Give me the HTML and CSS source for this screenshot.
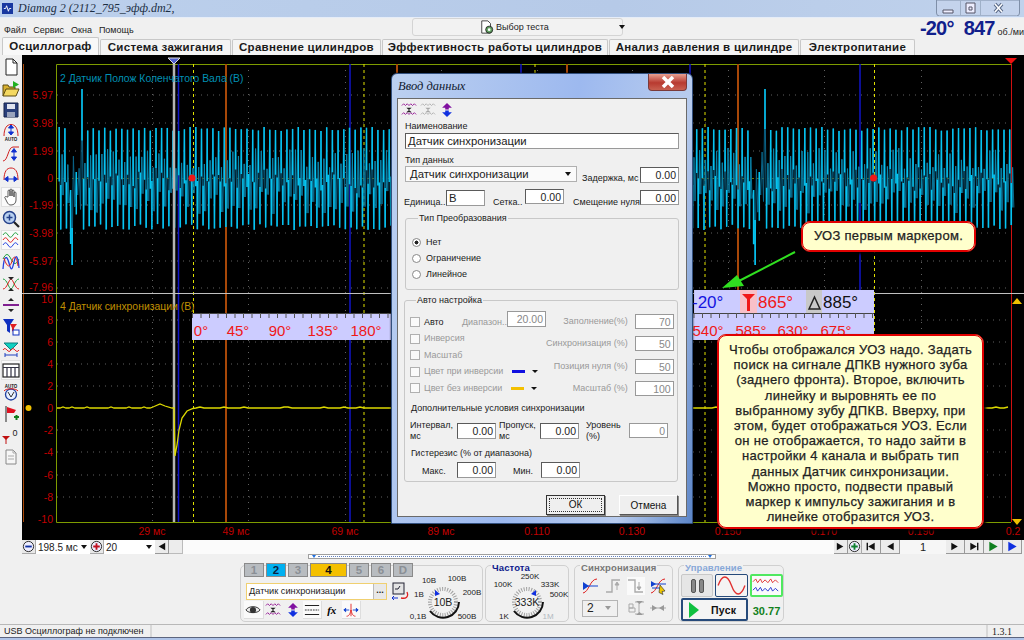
FILE: index.html
```html
<!DOCTYPE html>
<html lang="ru">
<head>
<meta charset="utf-8">
<title>Diamag 2</title>
<link rel="stylesheet" href="styles.css">
</head>
<body>
<svg class="defs" xmlns="http://www.w3.org/2000/svg">
  <symbol id="i-doc" viewBox="0 0 18 18"><path d="M4 1h7l4 4v12H4z" fill="#fff" stroke="#222"/><path d="M11 1v4h4" fill="none" stroke="#222"/></symbol>
  <symbol id="i-folder" viewBox="0 0 18 18"><path d="M1 16V5h5l1 2h6v3" fill="#d8b030" stroke="#5a4a10"/><path d="M1 16l3-7h13l-3 7z" fill="#f4d860" stroke="#5a4a10"/><path d="M11 1l6 3.500-6 3.500z" fill="#20b020"/></symbol>
  <symbol id="i-save" viewBox="0 0 18 18"><path d="M2 2h14v14H2z" fill="#2a3f7a" stroke="#16244c"/><rect x="5" y="3" width="8" height="5" fill="#dfe3ee"/><rect x="5" y="11" width="8" height="5" fill="#9aa3bc"/></symbol>
  <symbol id="i-auto" viewBox="0 0 18 18"><path d="M2 13C2 5 5 1.500 9 1.500s7 3.500 7 11.500" fill="none" stroke="#d02020"/><path d="M9 3v8M6.500 5L9 2l2.500 3zM6.500 9l2.500 3 2.500-3z" fill="#1030d0" stroke="#1030d0"/><text x="9" y="17.500" class="tiny">AUTO</text></symbol>
  <symbol id="i-curve" viewBox="0 0 18 18"><path d="M1 16C6 16 6 2 11 2h6" fill="none" stroke="#d02020"/><path d="M12 5v9M9.500 7L12 3.500 14.500 7zM9.500 12l2.500 3.500 2.500-3.500z" fill="#1030d0" stroke="#1030d0"/></symbol>
  <symbol id="i-arch" viewBox="0 0 18 18"><path d="M2 14C2 5 5 2 9 2s7 3 7 12" fill="none" stroke="#d02020"/><path d="M4 13h10M6 10.500L2.500 13 6 15.500zM12 10.500L15.500 13 12 15.500z" fill="#1030d0" stroke="#1030d0"/></symbol>
  <symbol id="i-hand" viewBox="0 0 18 18"><path d="M6 9V3c0-1.300 2-1.300 2 0v5V2c0-1.300 2-1.300 2 0v6V3c0-1.300 2-1.300 2 0v6V5c0-1.300 2-1.300 2 0v7c0 3-2 5-5 5-2 0-3-1-4-3L3 10c-1-1.200 1-2 2-1z" fill="#fff" stroke="#333" stroke-width=".8"/></symbol>
  <symbol id="i-zoom" viewBox="0 0 18 18"><path d="M11 11l6 6" stroke="#222" stroke-width="2.200"/><circle cx="7.500" cy="7.500" r="6" fill="#b8d0f0" stroke="#24408a" stroke-width="1.500"/><path d="M4.500 7.500h6M7.500 4.500v6" stroke="#24408a" stroke-width="1.500"/></symbol>
  <symbol id="i-waves" viewBox="0 0 18 18"><g fill="none" stroke-width="1"><path d="M1 4c2-3 3-3 5 0s3 3 5 0 3-3 5 0" stroke="#20a040"/><path d="M1 9c2-3 3-3 5 0s3 3 5 0 3-3 5 0" stroke="#e02020"/><path d="M1 14c2-3 3-3 5 0s3 3 5 0 3-3 5 0" stroke="#2040e0"/></g></symbol>
  <symbol id="i-loops" viewBox="0 0 18 18"><g fill="none"><path d="M1 6c3-6 5-6 8 0s5 6 8 0" stroke="#20a040"/><path d="M1 16C2 2 5 2 7 10s3 8 5-1 4-6 5 6" stroke="#2040e0" stroke-width="1.300"/><path d="M2 5c3 10 6 10 8 3s5-4 6 5" stroke="#e02020"/></g></symbol>
  <symbol id="i-cross" viewBox="0 0 18 18"><g fill="none"><path d="M1 4c4 0 6 10 8 10s4-10 8-10" stroke="#20a040"/><path d="M1 14c4 0 6-10 8-10s4 10 8 10" stroke="#e02020"/></g><path d="M6 2h6L9 5zM6 16h6L9 13z" fill="#222"/></symbol>
  <symbol id="i-sep" viewBox="0 0 18 18"><path d="M1 9h16" stroke="#802090" stroke-width="2"/><path d="M6 5l3-3 3 3zM6 13l3 3 3-3z" fill="#222"/></symbol>
  <symbol id="i-filter" viewBox="0 0 18 18"><path d="M1 1h11L8 7v8l-3-2V7z" fill="#1030c0"/><path d="M8 6h7l-3 4v4l-2-1v-3z" fill="#e02020"/><rect x="11" y="12" width="6" height="5" fill="#fff" stroke="#1030c0"/></symbol>
  <symbol id="i-funnel" viewBox="0 0 18 18"><path d="M2 3h14L9 10z" fill="#10d0c0" stroke="#108080"/><path d="M1 10c3-5 5 5 8 0s5 5 8 0" fill="none" stroke="#e02020"/><path d="M3 15h12M3 13v4M15 13v4" stroke="#2040c0"/></symbol>
  <symbol id="i-table" viewBox="0 0 18 18"><rect x="1" y="3" width="16" height="13" fill="#fff" stroke="#222" stroke-width="1.200"/><path d="M1 6.500h16M5 6v10M9 6v10M13 6v10" stroke="#334" stroke-width="1.200"/></symbol>
  <symbol id="i-gauge" viewBox="0 0 18 18"><text x="9" y="5" class="tiny">AUTO</text><circle cx="9" cy="11.500" r="5.500" fill="#e8f0ff" stroke="#2040a0" stroke-width="1.300"/><path d="M6 9l3 5 3-5" fill="none" stroke="#333"/><path d="M2 8c2-3 12-3 14 0" fill="none" stroke="#e02020"/></symbol>
  <symbol id="i-flag" viewBox="0 0 18 18"><path d="M4 1v16" stroke="#222"/><path d="M5 2l9 3-2 3H5z" fill="#e01020"/><path d="M12 12h5M14.500 10v5" stroke="#108020" stroke-width="2"/></symbol>
  <symbol id="i-zero" viewBox="0 0 18 18"><path d="M0 9h8L4 13z" fill="#c01010"/><path d="M4 12v5" stroke="#c01010"/><text x="13" y="9" class="ztext">0</text></symbol>
  <symbol id="i-notes" viewBox="0 0 18 18"><path d="M4 2h7l3 3v11H4z" fill="#f6f6f6" stroke="#888"/><path d="M11 2v3h3M6 8h6M6 11h6" fill="none" stroke="#aaa"/></symbol>
  <symbol id="i-dwave" viewBox="0 0 18 18"><g fill="none" stroke="#901090"><path d="M1 4l2-2 2 2 2-2 2 2 2-2 2 2 2-2 2 2"/><path d="M1 14l2-2 2 2 2-2 2 2 2-2 2 2 2-2 2 2"/></g><path d="M6 6.500h6L9 9zM6 11.500h6L9 9z" fill="#222"/></symbol>
  <symbol id="i-updown" viewBox="0 0 18 18"><path d="M9 1L3.500 6.500H7V8.500h4V6.500h3.500z" fill="#8010a0"/><path d="M9 17L3.500 11.500H7V9.500h4v2h3.500z" fill="#1030e0"/></symbol>
  <symbol id="i-eye" viewBox="0 0 18 18"><path d="M1 9c3-5 13-5 16 0-3 4-13 4-16 0z" fill="#eee" stroke="#222"/><circle cx="9" cy="9" r="3.500" fill="#333"/></symbol>
  <symbol id="i-lines" viewBox="0 0 18 18"><path d="M1 4h16M1 14h16" stroke="#222" stroke-width="1.200"/><path d="M1 9h16" stroke="#222" stroke-dasharray="2 1"/></symbol>
  <symbol id="i-syncarrows" viewBox="0 0 18 18"><path d="M9 2v14" stroke="#e02020"/><path d="M1 9h6M3 7l-2 2 2 2zM17 9h-6M15 7l2 2-2 2z" stroke="#1040d0" fill="#1040d0"/><path d="M4 16c3 0 4-3 5-7 1 4 2 7 5 7" fill="none" stroke="#e02020"/></symbol>
  <symbol id="i-scope" viewBox="0 0 18 18"><rect x="2" y="1" width="11" height="11" fill="#e4e4e4" stroke="#223"/><path d="M4 7h3l2-3" fill="none" stroke="#223"/><path d="M1 16h6M3 14l-2 2 2 2" fill="none" stroke="#1030d0"/><path d="M10 16c5 1 8-1 6-6" fill="none" stroke="#e02020" stroke-width="1.300"/></symbol>
  <symbol id="i-sync1" viewBox="0 0 18 18"><path d="M1 16C7 15 8 2 15 2" fill="none" stroke="#e02020"/><path d="M2 9h14" stroke="#1040d0"/><path d="M1 5l6 4-6 4z" fill="#1040d0"/></symbol>
  <symbol id="i-step-up" viewBox="0 0 18 18"><path d="M1 15h6V3h8" fill="none" stroke="#aaa" stroke-width="1.400"/><path d="M12 13V6M10 8l2-3 2 3z" stroke="#aaa" fill="#aaa"/></symbol>
  <symbol id="i-step-down" viewBox="0 0 18 18"><path d="M1 3h7v12h8" fill="none" stroke="#aaa" stroke-width="1.400"/><path d="M12 5v7M10 10l2 3 2-3z" stroke="#aaa" fill="#aaa"/></symbol>
  <symbol id="i-sync2" viewBox="0 0 18 18"><path d="M1 16C7 15 8 2 15 2" fill="none" stroke="#e02020"/><path d="M2 7h14M2 11h8" stroke="#1040d0"/><path d="M1 4l5 3-5 3z" fill="#1040d0"/><path d="M10 8l5 6-3 .500 1 3-4-2z" fill="#f0c800" stroke="#222" stroke-width=".6"/></symbol>
  <symbol id="i-gsync" viewBox="0 0 18 18"><path d="M2 5h4v4H2zM2 9h6v4H2z" fill="none" stroke="#aaa"/><path d="M8 3h9M8 15h9M12 3v12" stroke="#aaa"/><path d="M9 2h7l-3.500 3zM9 16h7l-3.500-3z" fill="#999"/></symbol>
  <symbol id="i-gin" viewBox="0 0 18 18"><path d="M1 9h16" stroke="#aaa"/><path d="M3 6l5 3-5 3zM15 6l-5 3 5 3z" fill="#999"/></symbol>
  <symbol id="i-minus" viewBox="0 0 14 14"><circle cx="7" cy="7" r="5.500" fill="#eef" stroke="#222"/><path d="M3.500 7h7" stroke="#1030a0" stroke-width="2"/></symbol>
  <symbol id="i-plus" viewBox="0 0 14 14"><circle cx="7" cy="7" r="5.500" fill="#eef" stroke="#222"/><path d="M3.500 7h7M7 3.500v7" stroke="#c01020" stroke-width="2"/></symbol>
  <symbol id="i-plusg" viewBox="0 0 14 14"><circle cx="7" cy="7" r="5.500" fill="#eef" stroke="#222"/><path d="M3.500 7h7M7 3.500v7" stroke="#108030" stroke-width="2"/></symbol>
  <symbol id="i-first" viewBox="0 0 14 14"><path d="M3 3v8" stroke="#111" stroke-width="1.500"/><path d="M11 3v8L4 7z" fill="#111"/></symbol>
  <symbol id="i-prev" viewBox="0 0 14 14"><path d="M11 3v8L4 7z" fill="#111"/></symbol>
  <symbol id="i-next" viewBox="0 0 14 14"><path d="M3 3v8l7-4z" fill="#111"/></symbol>
  <symbol id="i-last" viewBox="0 0 14 14"><path d="M11 3v8" stroke="#111" stroke-width="1.500"/><path d="M3 3v8l7-4z" fill="#111"/></symbol>
  <symbol id="i-pg" viewBox="0 0 14 14"><path d="M3 2v10l9-5z" fill="#108020"/></symbol>
  <symbol id="i-pb" viewBox="0 0 14 14"><path d="M3 2v10l9-5z" fill="#1030e0"/></symbol>
  <symbol id="i-test" viewBox="0 0 16 16"><path d="M2 1h7l3 3v11H2z" fill="#fff" stroke="#333"/><circle cx="10.500" cy="11" r="4" fill="#60a060" stroke="#222"/><circle cx="10.500" cy="11" r="1.500" fill="#fff"/></symbol>
</svg>

<div class="app">
  <header class="titlebar">
    <div class="title-left">
      <svg class="appicon" viewBox="0 0 12 12"><rect width="12" height="12" fill="#1838a0"/><path d="M2 6h2l1-3 2 6 1-3h2" fill="none" stroke="#fff"/></svg>
      <span class="apptitle">Diamag 2 (2112_795_эфф.dm2,</span>
    </div>
    <div class="winctrls">
      <svg viewBox="0 0 84 16" class="winsvg">
        <path d="M.5 0v13a3 3 0 0 0 3 3h77a3 3 0 0 0 3-3V0z" fill="#c4d3ec" stroke="#7f8fa8"/>
        <path d="M24.500 0v16M44.500 0v16" stroke="#9fb0c8"/>
        <path d="M7 10h10v3H7z" fill="#eef" stroke="#556"/>
        <path d="M30 3h9v10h-9z" fill="#eef" stroke="#556"/><path d="M33 7h3v3h-3z" fill="none" stroke="#556"/>
        <path d="M59 4l7 8M66 4l-7 8" stroke="#5a6a88" stroke-width="3.500"/><path d="M59 4l7 8M66 4l-7 8" stroke="#fff" stroke-width="1.500"/>
      </svg>
    </div>
  </header>

  <div class="menubar">
    <nav class="menu"><span>Файл</span><span>Сервис</span><span>Окна</span><span>Помощь</span></nav>
    <div class="testcombo">
      <svg class="testicon"><use href="#i-test"/></svg>
      <span class="testlabel">Выбор теста</span>
      <span class="caret"></span>
    </div>
    <div class="rpm"><b>-20°</b><b class="rpmval">847</b><small>об./ми</small></div>
  </div>

  <nav class="tabs">
    <span class="tab active t1">Осциллограф</span>
    <span class="tab t2">Система зажигания</span>
    <span class="tab t3">Сравнение цилиндров</span>
    <span class="tab t4">Эффективность работы цилиндров</span>
    <span class="tab t5">Анализ давления в цилиндре</span>
    <span class="tab t6">Электропитание</span>
  </nav>

  <div class="main">
    <aside class="tools">
      <svg class="tool"><use href="#i-doc"/></svg>
      <svg class="tool"><use href="#i-folder"/></svg>
      <svg class="tool"><use href="#i-save"/></svg>
      <svg class="tool"><use href="#i-auto"/></svg>
      <svg class="tool"><use href="#i-curve"/></svg>
      <svg class="tool"><use href="#i-arch"/></svg>
      <svg class="tool pressed"><use href="#i-hand"/></svg>
      <svg class="tool"><use href="#i-zoom"/></svg>
      <svg class="tool pressed"><use href="#i-waves"/></svg>
      <svg class="tool"><use href="#i-loops"/></svg>
      <svg class="tool"><use href="#i-cross"/></svg>
      <svg class="tool"><use href="#i-sep"/></svg>
      <svg class="tool"><use href="#i-filter"/></svg>
      <svg class="tool"><use href="#i-funnel"/></svg>
      <svg class="tool pressed"><use href="#i-table"/></svg>
      <svg class="tool"><use href="#i-gauge"/></svg>
      <svg class="tool"><use href="#i-flag"/></svg>
      <svg class="tool"><use href="#i-zero"/></svg>
      <svg class="tool"><use href="#i-notes"/></svg>
    </aside>

    <svg class="chart" viewBox="22 55 1002 485" xmlns="http://www.w3.org/2000/svg">
      <rect x="22" y="55" width="1002" height="485" fill="#000"/>
      <path class="griddot" d="M57 95H1011M57 123H1011M57 151H1011M57 205H1011M57 233H1011M57 261H1011M57 288H1011M57 320H1011M57 342H1011M57 364H1011M57 386H1011M57 430H1011M57 452H1011M57 475H1011M57 497H1011"/>
      <path class="griddot" d="M152.500 64V522M248.500 64V522M345.500 64V522M441.500 64V522M537.500 64V522M632.500 64V522M728.500 64V522M824.500 64V522M921.500 64V522"/>
      <path class="zeroline" d="M57 178.500H1011"/>
      <path class="frame" d="M1011 64.500H56.500V522.500H1011"/>
      <path class="redline" d="M1011.500 64V522"/>
      <path class="brown thin" d="M23.500 64V522"/>
      <path class="brown" d="M226 64V522M397 64V522M567 64V522M738 64V522"/>
      <path class="blue" d="M178.500 64V522M350 64V522M521 64V522M690 64V522M860 64V522"/>
      <path class="dash" d="M193.500 64V522M364 64V522M535 64V522M705 64V522M874.500 64V522"/>
      <path id="wave-dark" class="wave-dark"/>
      <path id="wave-mid" class="wave-mid"/>
      <path id="wave-bright" class="wave-bright"/>
      <path class="gray" d="M174 62V522"/>
      <path class="whiteline" d="M22 293.500H1024"/>
      <path id="trace" class="trace"/>
      <path d="M168 58h12l-6 6z" fill="#5060d0" stroke="#ddd"/>
      <path d="M1005 58h12l-6 6z" fill="#f01010"/>
      <path d="M1012 304l5-6 5 6z" fill="#f0c000"/>
      <path d="M1012 519h10l-5 6z" fill="#f0c000"/>
      <circle cx="28.500" cy="408" r="3" fill="#f0c000"/>
      <circle cx="192" cy="178" r="3.500" fill="#f01818"/>
      <circle cx="873.500" cy="178" r="3.500" fill="#f01818"/>
      <text class="chan-a" x="60" y="82">2 Датчик Полож Коленчатого Вала (В)</text>
      <text class="chan-b" x="60" y="310">4 Датчик синхронизации (В)</text>
      <g class="ylab">
        <text x="53" y="99">5.97</text><text x="53" y="127">3.98</text><text x="53" y="155">1.99</text><text x="53" y="182">0</text>
        <text x="53" y="209">-1.99</text><text x="53" y="237">-3.98</text><text x="53" y="265">-5.97</text><text x="53" y="291">-7.96</text>
        <text x="53" y="303">10</text><text x="53" y="324">8</text><text x="53" y="346">6</text><text x="53" y="368">4</text><text x="53" y="390">2</text>
        <text x="53" y="412">0</text><text x="53" y="434">-2</text><text x="53" y="456">-4</text><text x="53" y="479">-6</text><text x="53" y="501">-8</text><text x="53" y="523">-10</text>
      </g>
      <g class="xlab">
        <text x="152" y="535">29 мс</text><text x="236" y="535">49 мс</text><text x="345" y="535">69 мс</text><text x="441" y="535">89 мс</text>
        <text x="537" y="535">0.110</text><text x="632" y="535">0.130</text><text x="728" y="535">0.150</text><text x="824" y="535">0.170</text><text x="921" y="535">0.190</text><text x="1013" y="535">0.2</text>
      </g>
      <rect x="192" y="313" width="682" height="27" fill="#ccccff"/>
      <rect x="694" y="290" width="180" height="23" fill="#ccccff"/>
      <rect x="740" y="290" width="17" height="23" fill="#f8c0c8"/>
      <rect x="806" y="290" width="16" height="23" fill="#c8c8c8"/>
      <path d="M742 294h13l-5 5v12h-3V299z" fill="#f01818"/>
      <path d="M809 309l5.500-12 5.500 12z" fill="none" stroke="#222" stroke-width="1.500"/>
      <path d="M192 313.500H874" stroke="#444"/>
      <path class="rticks" d="M192 315.500H874"/>
      <g class="rlab">
        <text x="201" y="336">0°</text><text x="238" y="336">45°</text><text x="280" y="336">90°</text><text x="323" y="336">135°</text><text x="366" y="336">180°</text>
        <text x="708" y="336">540°</text><text x="751" y="336">585°</text><text x="793" y="336">630°</text><text x="836" y="336">675°</text>
      </g>
      <g class="rtop">
        <text class="rblue" x="692" y="308">-20°</text>
        <text class="rred" x="758" y="308">865°</text>
        <text x="823" y="308">885°</text>
      </g>
      <path d="M795 252l-58 30" stroke="#30e020" stroke-width="2"/>
      <path d="M722 288l15-13 7 11z" fill="#30e020"/>
    </svg>
  </div>

  <div class="zoombar">
    <svg class="zb-ic"><use href="#i-minus"/></svg>
    <div class="zb-field f1"><span>198.5 мс</span><i class="caret"></i></div>
    <svg class="zb-ic"><use href="#i-plus"/></svg>
    <div class="zb-field f2"><span>20</span><i class="caret"></i></div>
    <svg class="zb-btn"><use href="#i-prev"/></svg>
    <div class="zb-thumb"></div>
    <div class="zb-track"></div>
    <svg class="zb-btn"><use href="#i-next"/></svg>
    <svg class="zb-ic"><use href="#i-plusg"/></svg>
    <svg class="zb-btn w"><use href="#i-first"/></svg>
    <svg class="zb-btn w"><use href="#i-prev"/></svg>
    <div class="zb-page">1</div>
    <svg class="zb-btn w"><use href="#i-next"/></svg>
    <svg class="zb-btn w"><use href="#i-last"/></svg>
    <svg class="zb-btn w"><use href="#i-pg"/></svg>
    <svg class="zb-btn w"><use href="#i-pb"/></svg>
  </div>

  <div class="slider"><span class="tri"></span><span class="dots"></span><span class="tri"></span></div>

  <div class="groups">
    <section class="group g1">
      <div class="g1-left">
        <div class="chans">
          <span class="ch off">1</span><span class="ch cyan">2</span><span class="ch off">3</span><span class="ch gold">4</span><span class="ch off">5</span><span class="ch off">6</span><span class="ch off">D</span>
        </div>
        <div class="namerow">
          <div class="namebox"><span>Датчик синхронизации</span><b>...</b></div>
          <svg class="ic18"><use href="#i-scope"/></svg>
        </div>
        <div class="iconrow">
          <span class="cell raised"><svg class="ic16"><use href="#i-eye"/></svg></span>
          <span class="cell"><svg class="ic16"><use href="#i-dwave"/></svg></span>
          <span class="cell"><svg class="ic16"><use href="#i-updown"/></svg></span>
          <span class="cell raised"><svg class="ic16"><use href="#i-lines"/></svg></span>
          <span class="cell fx">fx</span>
          <span class="cell raised"><svg class="ic16"><use href="#i-syncarrows"/></svg></span>
        </div>
      </div>
      <svg class="knob" viewBox="415 570 68 52">
        <circle cx="443" cy="602" r="13" class="kband"/>
        <path d="M430 611A16 16 0 0 0 459 602" class="karc"/>
        <path d="M435 590l5 4-5 2z" fill="#1030e0"/>
        <text class="kmid" x="443" y="606">10В</text>
        <text x="429" y="583">10В</text><text x="457" y="581">100В</text><text x="472" y="595">200В</text><text x="467" y="619">500В</text><text x="418" y="619">0,1В</text><text x="419" y="597">1В</text>
      </svg>
    </section>
    <section class="group g2">
      <h3 class="legend navy">Частота</h3>
      <svg class="knob" viewBox="486 570 83 52">
        <circle cx="527" cy="602" r="13" class="kband"/>
        <path d="M514 611A16 16 0 0 0 543 602" class="karc"/>
        <path d="M536 590l-5 4 5 2z" fill="#1030e0"/>
        <text class="kmid" x="527" y="606">333K</text>
        <text x="503" y="587">100K</text><text x="530" y="579">250K</text><text x="550" y="587">333K</text><text x="559" y="597">500K</text><text x="504" y="619">1K</text><text class="kdim" x="548" y="619">1M</text>
      </svg>
    </section>
    <section class="group g3">
      <h3 class="legend gray-l">Синхронизация</h3>
      <div class="syncrow">
        <svg class="ic18"><use href="#i-sync1"/></svg><svg class="ic18"><use href="#i-step-up"/></svg><span class="hilite"><svg class="ic18"><use href="#i-step-down"/></svg></span><svg class="ic18"><use href="#i-sync2"/></svg>
      </div>
      <div class="syncrow r2">
        <div class="syncsel"><span>2</span><i class="caret dim"></i></div>
        <svg class="ic18"><use href="#i-gsync"/></svg><svg class="ic18"><use href="#i-gin"/></svg>
      </div>
    </section>
    <section class="group g4">
      <h3 class="legend blue-l">Управление</h3>
      <div class="ctlgrid">
        <div class="ctl pause"><i></i><i></i></div>
        <div class="ctl navy-b"><svg viewBox="0 0 30 20"><path d="M2 10c4-11 9-11 13 0s9 11 13 0" fill="none" stroke="#e03030" stroke-width="1.300"/></svg></div>
        <div class="ctl green-b"><svg viewBox="0 0 31 20"><path d="M1 6l3-3 2 4 3-4 2 4 3-3 3 3 3-4 2 4 3-3 3 3" fill="none" stroke="#e03030"/><path d="M1 15l3-3 2 4 3-4 2 4 3-3 3 3 3-4 2 4 3-3 3 3" fill="none" stroke="#2030d0"/></svg></div>
        <div class="ctl run"><svg viewBox="0 0 16 20"><path d="M2 2l10 8-10 8z" fill="#10c040"/></svg><b>Пуск</b></div>
        <b class="fps">30.77</b>
      </div>
    </section>
  </div>

  <footer class="status">
    <span class="st st1">USB Осциллограф не подключен</span>
    <span class="st st2"></span>
    <span class="st st3">1.3.1</span>
  </footer>
  <div class="taskstrip"></div>

  <aside class="callout c1">УОЗ первым маркером.</aside>
  <aside class="callout c2">Чтобы отображался УОЗ надо. Задать<br>поиск на сигнале ДПКВ нужного зуба<br>(заднего фронта). Второе, включить<br>линейку и выровнять ее по<br>выбранному зубу ДПКВ. Вверху, при<br>этом, будет отображаться УОЗ. Если<br>он не отображается, то надо зайти в<br>настройки 4 канала и выбрать тип<br>данных Датчик синхронизации.<br>Можно просто, подвести правый<br>маркер к импульсу зажигания и в<br>линейке отобразится УОЗ.</aside>

  <div class="dialog">
    <div class="dlg-title"><span>Ввод данных</span>
      <div class="dlg-close"><svg viewBox="0 0 16 12"><path d="M3 1l10 10M13 1L3 11" stroke="#fff" stroke-width="3.500"/></svg></div>
    </div>
    <div class="dlg-body">
      <div class="dlg-tools">
        <svg class="ic16"><use href="#i-dwave"/></svg>
        <svg class="ic16 faded"><use href="#i-dwave"/></svg>
        <svg class="ic16"><use href="#i-updown"/></svg>
      </div>
      <label class="lbl l-name">Наименование</label>
      <div class="inp full">Датчик синхронизации</div>
      <label class="lbl l-type">Тип данных</label>
      <div class="row r-type">
        <div class="inp sel">Датчик синхронизации<i class="caret"></i></div>
        <span class="lbl sp-del">Задержка, мс</span>
        <div class="inp num">0.00</div>
      </div>
      <div class="row r-unit">
        <span class="lbl">Единица..</span>
        <div class="inp unit">В</div>
        <span class="lbl sp-grid">Сетка..</span>
        <div class="inp num up">0.00</div>
        <span class="lbl sp-zero">Смещение нуля</span>
        <div class="inp num">0.00</div>
      </div>
      <fieldset class="fs fs1">
        <legend>Тип Преобразования</legend>
        <div class="radio on"><i></i>Нет</div>
        <div class="radio"><i></i>Ограничение</div>
        <div class="radio"><i></i>Линейное</div>
      </fieldset>
      <fieldset class="fs fs2">
        <legend>Авто настройка</legend>
        <div class="auto-top">
          <div class="checks">
            <div class="chk"><i></i>Авто</div>
            <div class="chk dis"><i></i>Инверсия</div>
            <div class="chk dis"><i></i>Масштаб</div>
            <div class="chk dis"><i></i>Цвет при инверсии<u class="sw bluesw"></u><i class="caret sm"></i></div>
            <div class="chk dis"><i></i>Цвет без инверсии<u class="sw goldsw"></u><i class="caret sm"></i></div>
          </div>
          <div class="diap"><span class="lbl dim">Диапазон..</span><div class="inp num dimv">20.00</div></div>
          <div class="rights">
            <div class="rfield"><span class="lbl dim">Заполнение(%)</span><div class="inp num dimv">70</div></div>
            <div class="rfield"><span class="lbl dim">Синхронизация (%)</span><div class="inp num dimv">50</div></div>
            <div class="rfield"><span class="lbl dim">Позиция нуля (%)</span><div class="inp num dimv">50</div></div>
            <div class="rfield"><span class="lbl dim">Масштаб (%)</span><div class="inp num dimv">100</div></div>
          </div>
        </div>
        <div class="lbl extra">Дополнительные условия синхронизации</div>
        <div class="row triple">
          <span class="lbl two w47">Интервал,<br>мс</span><div class="inp num">0.00</div>
          <span class="lbl two w41">Пропуск,<br>мс</span><div class="inp num">0.00</div>
          <span class="lbl two w43">Уровень<br>(%)</span><div class="inp num dimv">0</div>
        </div>
        <div class="lbl hyst">Гистерезис (% от диапазона)</div>
        <div class="row double">
          <span class="lbl maks">Макс.</span><div class="inp num">0.00</div>
          <span class="lbl mins">Мин.</span><div class="inp num">0.00</div>
        </div>
      </fieldset>
      <div class="dlg-btns">
        <button class="btn ok"><span>ОК</span></button>
        <button class="btn">Отмена</button>
      </div>
    </div>
  </div>
</div>
<script src="script.js"></script>
</body>
</html>
```

FILE: styles.css
```css
* { box-sizing: border-box; }
html, body { margin: 0; padding: 0; }
body { width: 1024px; height: 640px; overflow: hidden; background: #f0f0f0; font-family: "Liberation Sans", Arial, sans-serif; }
.defs { display: none; }
.tiny { font: bold 4.5px "Liberation Sans", sans-serif; text-anchor: middle; fill: #111; }
.ztext { font: 9px "Liberation Sans", sans-serif; text-anchor: middle; fill: #222; }
.app { position: relative; width: 1024px; height: 640px; overflow: hidden; background: #f0f0f0; }

.caret { display: inline-block; width: 0; height: 0; border: 3.5px solid transparent; border-top: 4px solid #111; border-bottom: 0; }
.caret.dim { border-top-color: #999; }
.caret.sm { border-width: 3px; border-top-width: 3px; border-bottom: 0; margin-left: 3px; }

/* title bar */
.titlebar { height: 18px; display: flex; justify-content: space-between; background: linear-gradient(90deg, #bcd0ec, #b6cae8 60%, #c0d2ec); border-bottom: 1px solid #e6edf8; }
.title-left { display: flex; align-items: center; gap: 5px; padding-left: 2px; }
.appicon { width: 11px; height: 11px; }
.apptitle { font: italic 12px "Liberation Serif", serif; color: #1c2e44; white-space: nowrap; }
.winctrls { padding-right: 4px; }
.winsvg { display: block; width: 84px; height: 16px; }

/* menu */
.menubar { height: 20px; display: flex; background: #f0f0f0; }
.menu { width: 412px; display: flex; gap: 7px; padding: 7px 0 0 4px; font-size: 9px; color: #222; line-height: 11px; }
.testcombo { width: 211px; height: 18px; display: flex; align-items: center; border: 1px solid #d4d4d4; border-radius: 3px; padding-left: 67px; background: #f2f2f2; }
.testicon { width: 14px; height: 16px; flex: none; }
.testlabel { font-size: 9px; margin-left: 2px; color: #222; white-space: nowrap; }
.testcombo .caret { margin-left: 70px; border-width: 3px; border-top-width: 4px; }
.rpm { margin-left: auto; display: flex; align-items: baseline; color: #11208c; }
.rpm b { font-size: 20px; line-height: 20px; letter-spacing: -.8px; }
.rpm .rpmval { margin-left: 10px; }
.rpm small { font-size: 9px; color: #222; margin-left: 3px; white-space: nowrap; }

/* tabs */
.tabs { height: 17px; display: flex; padding-left: 2px; gap: 1px; align-items: flex-end; }
.tab { height: 16px; border: 1px solid #c8c8c8; border-bottom: 0; border-radius: 2px 2px 0 0; background: #f4f4f4; font-size: 11.500px; font-weight: bold; color: #1a1a1a; text-align: center; line-height: 15px; letter-spacing: .28px; white-space: nowrap; overflow: hidden; }
.tab.active { height: 18px; background: #f8f8f8; line-height: 16px; font-size: 11.500px; }
.t1 { width: 97px; } .t2 { width: 131px; } .t3 { width: 149px; } .t4 { width: 226px; } .t5 { width: 190px; } .t6 { width: 115px; }

/* main */
.main { height: 485px; display: flex; }
.tools { width: 22px; display: flex; flex-direction: column; align-items: center; background: #f0f0f0; padding-top: 1px; }
.tool { width: 18px; height: 18px; margin: 1.850px 0; flex: none; }
.tool.pressed { background: #fafafa; outline: 1px solid #e0e0e0; }
.chart { width: 1002px; height: 485px; display: block; font-family: "Liberation Sans", sans-serif; }
.griddot { stroke: #606060; stroke-dasharray: 1 5; fill: none; }
.zeroline { stroke: #707000; stroke-dasharray: 2 3; fill: none; }
.frame { stroke: #7e9c00; fill: none; }
.redline { stroke: #d01010; }
.brown { stroke: #a84808; stroke-width: 2; }
.brown.thin { stroke-width: 1; }
.blue { stroke: #1014c8; stroke-width: 1.500; }
.dash { stroke: #e0e000; stroke-dasharray: 3 3; }
.gray { stroke: #b4b4b4; stroke-width: 2.500; }
.whiteline { stroke: #c0c0c0; }
.wave-dark { stroke: #0a6488; stroke-width: 1; fill: none; }
.wave-mid { stroke: #0a88ac; stroke-width: 1; fill: none; }
.wave-bright { stroke: #06c4f0; stroke-width: 1.500; fill: none; }
.trace { stroke: #dcd800; stroke-width: 1.300; fill: none; }
.chan-a { font-size: 10.400px; fill: #0090b4; }
.chan-b { font-size: 10.400px; fill: #c09000; }
.ylab text { font-size: 10.500px; fill: #c40000; text-anchor: end; }
.xlab text { font-size: 10.500px; fill: #c00000; text-anchor: middle; }
.rticks { stroke: #555; stroke-width: 5; stroke-dasharray: 1 7.500; fill: none; }
.rlab text { font-size: 15px; fill: #f01818; text-anchor: middle; }
.rtop text { font-size: 17px; fill: #111; }
.rtop .rblue { fill: #1414e0; }
.rtop .rred { fill: #f01818; }

/* zoom bar */
.zoombar { height: 14px; display: flex; padding-left: 22px; background: #f0f0f0; font-size: 10px; color: #222; }
.zb-ic { width: 14px; height: 14px; background: #e8e8e8; border-right: 1px solid #aaa; border-bottom: 1px solid #aaa; flex: none; }
.zb-field { background: #fff; display: flex; align-items: center; justify-content: space-between; padding: 0 3px 0 2px; white-space: nowrap; flex: none; }
.f1 { width: 54px; } .f2 { width: 51px; }
.zb-btn { width: 14px; height: 14px; background: #ececec; border-right: 1px solid #999; border-bottom: 1px solid #999; flex: none; }
.zb-btn.w { width: 19px; }
.zb-thumb { width: 14px; height: 14px; background: #ececec; border-right: 1px solid #bbb; border-bottom: 1px solid #bbb; flex: none; }
.zb-track { width: 651px; background: #fbfbfb; flex: none; }
.zb-page { width: 46px; text-align: center; line-height: 14px; font-size: 11px; background: #f6f6f6; flex: none; }

/* slider */
.slider { width: 408px; height: 5px; margin: 0 0 0 308px; display: flex; align-items: center; justify-content: space-between; border: 1px solid #a0a0a0; background: #fff; padding: 0 3px; }
.slider .dots { flex: 1; border-top: 1px dotted #6080c0; margin: 0 2px; }
.slider .tri { width: 0; height: 0; border: 2.500px solid transparent; border-top: 3px solid #2070e0; border-bottom: 0; }

/* groups */
.groups { height: 60px; margin-top: 3px; padding: 3px 0 0 240px; display: flex; }
.group { position: relative; height: 57px; border: 1px solid #d0d0d0; border-radius: 5px; }
.legend { margin: 0; font-size: 9.500px; font-weight: bold; line-height: 12px; letter-spacing: .1px; position: absolute; top: -4px; left: 5px; background: #f0f0f0; padding: 0 1px; white-space: nowrap; }
.legend.navy { color: #0e1a8c; }
.legend.gray-l { color: #777; }
.legend.blue-l { color: #88a8d8; }
.g1 { width: 243px; display: flex; }
.g2 { width: 84px; margin-left: 2px; }
.g3 { width: 99px; margin-left: 5px; }
.g4 { width: 106px; margin-left: 5px; }
.g1-left { width: 174px; flex: none; }
.chans { display: flex; gap: 2px; margin: -3px 0 0 3px; }
.ch { width: 20px; height: 14px; border: 1px solid #8a8a8a; background: #b8bcc0; color: #8a8f95; font-size: 11.500px; font-weight: bold; text-align: center; line-height: 13px; }
.ch.cyan { background: #00b0f0; color: #0a2040; }
.ch.gold { width: 37px; background: #f4c000; color: #111; }
.namerow { display: flex; align-items: center; gap: 4px; margin: 5px 0 0 5px; }
.namebox { width: 141px; height: 17px; display: flex; justify-content: space-between; background: #fff; border: 1px solid #f0d070; font-size: 9.200px; line-height: 15px; padding-left: 2px; color: #222; white-space: nowrap; }
.namebox b { width: 13px; background: #e8e8e8; border-left: 1px solid #bbb; font-size: 9px; text-align: center; line-height: 12px; }
.ic18 { width: 18px; height: 18px; flex: none; display: block; }
.ic16 { width: 16px; height: 16px; flex: none; display: block; }
.iconrow { display: flex; margin: 1px 0 0 3px; align-items: center; }
.cell { width: 19.500px; height: 18px; display: flex; align-items: center; justify-content: center; }
.cell.raised { background: #fafafa; border-right: 1px solid #ddd; border-bottom: 1px solid #ddd; }
.fx { font: italic bold 11px "Liberation Serif", serif; }
.knob { display: block; overflow: visible; font-family: "Liberation Sans", sans-serif; }
.g1 .knob { width: 68px; height: 52px; margin-top: 4px; margin-left: 0; flex: none; }
.g2 .knob { width: 83px; height: 52px; margin-top: 4px; }
.knob text { font-size: 8px; fill: #222; text-anchor: middle; }
.knob .kmid { font-size: 10.500px; }
.knob .kdim { fill: #b0b8c0; }
.kband { fill: #f2f2f2; stroke: #a0a0a0; stroke-width: 4; stroke-dasharray: 1 1.500; }
.karc { fill: none; stroke: #111; stroke-width: 2; }
.syncrow { display: flex; align-items: center; gap: 4.500px; padding: 11px 0 0 7px; }
.hilite { background: #fafafa; display: block; }
.syncrow.r2 { padding-top: 4px; gap: 4px; }
.syncsel { width: 36px; height: 17px; display: flex; align-items: center; justify-content: space-between; border: 1px solid #b4b4b4; padding: 0 6px 0 4px; font-size: 12px; color: #222; margin-right: 5px; flex: none; }
.ctlgrid { display: grid; grid-template-columns: 32px 33px 33px; grid-template-rows: 23px 23px; gap: 1px 2px; padding: 8px 0 0 2px; }
.ctl { border: 1px solid #c8c8c8; border-radius: 2px; display: flex; align-items: center; justify-content: center; background: #f0f0f0; }
.ctl svg { width: 100%; height: 100%; display: block; }
.pause { gap: 3px; background: #e6e6e6; }
.pause i { width: 5px; height: 14px; background: #888; border: 1px solid #555; border-radius: 2px; }
.navy-b { border: 1px solid #264a7a; background: #f4f4f4; }
.green-b { border: 2px solid #50e860; background: #fbfbfb; }
.run { grid-column: 1 / span 2; border: 2px solid #264a7a; justify-content: flex-start; gap: 8px; padding-left: 4px; background: #f4f4f4; }
.run svg { width: 16px; height: 20px; flex: none; }
.run b { font-size: 10.500px; color: #111; letter-spacing: .3px; }
.fps { font-size: 11px; color: #128020; align-self: end; justify-self: center; line-height: 14px; padding-bottom: 3px; white-space: nowrap; }

/* status */
.status { height: 13px; margin-top: 2px; border-top: 1px solid #b8b8b8; display: flex; font-size: 9px; color: #222; line-height: 11px; }
.st { border-right: 2px solid #d8d8d8; padding: 1px 0 0 4px; white-space: nowrap; flex: none; }
.st1 { width: 152px; } .st2 { width: 836px; } .st3 { border: 0; font-family: "Liberation Serif", serif; font-size: 10px; }
.taskstrip { height: 3px; background: linear-gradient(#223, #b0c4e8 40%); }

/* callouts */
.callout { position: absolute; background: #ffffcc; border: 1px solid #e00000; outline: 1px solid #e00000; outline-offset: -2px; border-radius: 9px; box-shadow: 2px 2px 3px #000; color: #222; text-align: center; font-size: 13px; letter-spacing: .3px; -webkit-text-stroke: .25px #222; white-space: nowrap; }
.c1 { left: 801px; top: 221px; width: 175px; height: 31px; line-height: 27px; }
.c2 { left: 717px; top: 334px; width: 267px; height: 195px; line-height: 15.200px; padding: 7px 8px 0; }

/* dialog */
.dialog { position: absolute; left: 391px; top: 73px; width: 302px; height: 451px; border: 1px solid #33507e; border-radius: 6px 6px 0 0; background: linear-gradient(100deg, #bcd0f0, #9db9ef 50%, #b8ccee 80%, #5d86c8 100%); padding: 0 5px 7px 5px; box-shadow: 0 0 2px #000; }
.dlg-title { height: 24px; display: flex; justify-content: space-between; }
.dlg-title span { font: italic 12.500px "Liberation Serif", serif; color: #111a30; padding-top: 5px; padding-left: 1px; }
.dlg-close { width: 39px; height: 17px; background: linear-gradient(#e8a090, #b83a30 55%, #c86050); border: 1px solid #7a3a3a; border-top: 0; border-radius: 0 0 4px 4px; display: flex; align-items: center; justify-content: center; }
.dlg-close svg { width: 16px; height: 12px; }
.dlg-body { height: 419px; background: #f0f0f0; border: 1px solid #6a6a6a; padding: 0 7px; font-size: 9px; color: #1a1a1a; }
.dlg-tools { display: flex; height: 19px; gap: 3px; align-items: center; padding-top: 3px; margin-left: -4px; }
.faded { opacity: .35; filter: grayscale(1); }
.lbl { display: block; font-size: 9px; line-height: 11px; white-space: nowrap; }
.l-name { margin-top: 2px; height: 13px; padding-top: 1px; }
.inp { background: #fff; border: 1px solid #5a5a5a; border-bottom-color: #999; border-right-color: #999; height: 16px; font-size: 11.300px; line-height: 13px; color: #222; padding: 1px 2px; white-space: nowrap; flex: none; }
.inp.full { width: 274px; height: 16px; padding-left: 2px; font-size: 11.300px; line-height: 13px; }
.l-type { margin-top: 5px; height: 12px; padding-top: 1px; }
.row { display: flex; align-items: flex-start; }
.r-type { height: 19px; }
.inp.sel { width: 172px; height: 16px; padding-left: 4px; border: 1px solid #b0b0b0; background: #fafafa; display: flex; justify-content: space-between; align-items: center; font-size: 11.300px; }
.inp.sel .caret { margin-right: 3px; }
.sp-del { width: 64px; margin-top: 7px; padding-left: 5px; }
.inp.num { width: 39px; text-align: right; font-size: 10.500px; line-height: 12px; padding: 1px 2px 0 0; }
.r-type .inp.num { margin-top: 1px; }
.r-unit { height: 16px; margin-top: 5px; }
.r-unit .lbl { margin-top: 7px; }
.r-unit .lbl:first-child { width: 42px; margin-left: -1px; }
.inp.unit { width: 39px; height: 16px; font-size: 11.300px; text-align: left; }
.sp-grid { width: 40px; padding-left: 8px; }
.inp.up { margin-top: -1px; }
.sp-zero { width: 76px; padding-left: 9px; }
.r-unit .inp.num { height: 15px; }
.fs { border: 1px solid #c8c8c8; border-radius: 3px; margin: 0; padding: 0; min-width: 0; }
.fs legend { font-size: 9px; line-height: 10px; padding: 0 1px; margin-left: 6px; color: #1a1a1a; }
.fs1 { width: 274px; height: 77px; margin-top: 7px; padding: 11px 0 0 6px; }
.radio { height: 16px; display: flex; align-items: center; gap: 5px; }
.radio i { width: 9px; height: 9px; border: 1px solid #888; border-radius: 50%; background: #fff; display: block; }
.radio.on i { background: radial-gradient(#222 35%, #fff 45%); }
.fs2 { width: 274px; height: 187px; margin-top: 5px; margin-left: -1px; padding: 8px 0 0 5px; }
.auto-top { display: flex; height: 84px; }
.checks { width: 52px; flex: none; padding-top: 1px; }
.chk { height: 16.500px; display: flex; align-items: center; gap: 4px; white-space: nowrap; line-height: 11px; }
.chk > i:first-child { width: 10px; height: 10px; border: 1px solid #b0b0b0; background: #fafafa; display: block; flex: none; }
.chk.dis { color: #999; }
.chk .sw { display: inline-block; width: 13px; height: 3px; margin-left: 5px; flex: none; }
.bluesw { background: #1010e0; }
.goldsw { background: #f4c000; }
.diap { display: flex; gap: 2px; width: 84px; margin-top: -2px; align-items: flex-start; flex: none; }
.diap .lbl { width: 43px; margin-top: 6px; }
.dim { color: #999; }
.rights { display: flex; flex-direction: column; gap: 6.500px; align-items: flex-end; flex: 1; padding-right: 9px; }
.rfield { display: flex; align-items: center; gap: 7px; height: 16px; justify-content: flex-end; }
.inp.dimv { color: #888; height: 15px; border-color: #999; }
.diap .inp.dimv { height: 16px; }
.extra { margin: 6px 0 0 1px; }
.triple { margin: 6px 0 0 0; height: 21px; align-items: center; }
.two { line-height: 10.500px; white-space: nowrap; }
.w47 { width: 47px; } .w41 { width: 41px; margin-left: 3px; } .w43 { width: 43px; margin-left: 7px; }
.hyst { margin: 7px 0 0 1px; }
.double { margin: 3px 0 0; align-items: center; }
.maks { width: 47px; padding-left: 12px; padding-top: 2px; }
.mins { width: 45px; padding-left: 17px; padding-top: 2px; }
.dlg-btns { display: flex; justify-content: space-between; margin: 13px 3px 0 141px; width: 132px; }
.btn { width: 59px; height: 20px; padding: 0; background: #efefef; border: 1px solid #fff; border-right-color: #555; border-bottom-color: #555; box-shadow: 1px 1px 0 #888; font: 10px "Liberation Sans", sans-serif; color: #111; }
.btn.ok { border: 1px solid #333; }
.btn.ok span { display: block; margin: 2px; border: 1px dotted #333; height: 14px; line-height: 12px; }
```

FILE: script.js
```javascript
// Deterministic waveform data for the oscilloscope traces.
(function () {
  var P = 683 / 120;
  var seed = 7;
  function rnd() { seed = (seed * 16807) % 2147483647; return seed / 2147483647; }
  function f(n) { return n.toFixed(1); }
  var dark = '', mid = '', bright = '';
  for (var i = 0; i < 168; i++) {
    var x = 59.2 + P * i;
    if (x > 1010) break;
    var k = (i - 4 + 120) % 120;
    var top = 127 + rnd() * 4;
    var bot = 224 + rnd() * 6;
    if (k === 0) { top = 89; }
    if (k === 118) { top = 190; bot = 265; }
    if (k === 119) { top = 172; bot = 195; }
    var m = 148 + rnd() * 22;
    var low = 190 + rnd() * 24;
    dark += (i ? 'L' : 'M') + f(x) + ' ' + f(top) + 'L' + f(x + 1.4) + ' ' + f(bot) +
      'L' + f(x + 2.8) + ' ' + f(m) + 'L' + f(x + 4.2) + ' ' + f(low);
    if (k < 118) mid += 'M' + f(x + 3) + ' ' + f(m) + 'V' + f(low);
    bright += 'M' + f(x) + ' ' + f(top) + 'V' + f(top + 40 + rnd() * 20);
    if (k <= 118) bright += 'M' + f(x + 1.6) + ' ' + f(bot - 36 - rnd() * 16) + 'V' + f(bot);
  }
  document.getElementById('wave-dark').setAttribute('d', dark);
  document.getElementById('wave-mid').setAttribute('d', mid);
  document.getElementById('wave-bright').setAttribute('d', bright);

  var t = 'M57 408';
  for (var xx = 60; xx < 156; xx += 3) t += 'L' + xx + ' ' + (408 + (rnd() > .8 ? -1 : 0));
  t += 'L160 404L165 406L172 408L174 408L175 456L177 445L179 430L182 418L187 411L193 408.500';
  for (var x2 = 196; x2 < 1011; x2 += 4) t += 'L' + x2 + ' ' + (408 + (rnd() > .85 ? -1 : 0));
  document.getElementById('trace').setAttribute('d', t);
})();
```
